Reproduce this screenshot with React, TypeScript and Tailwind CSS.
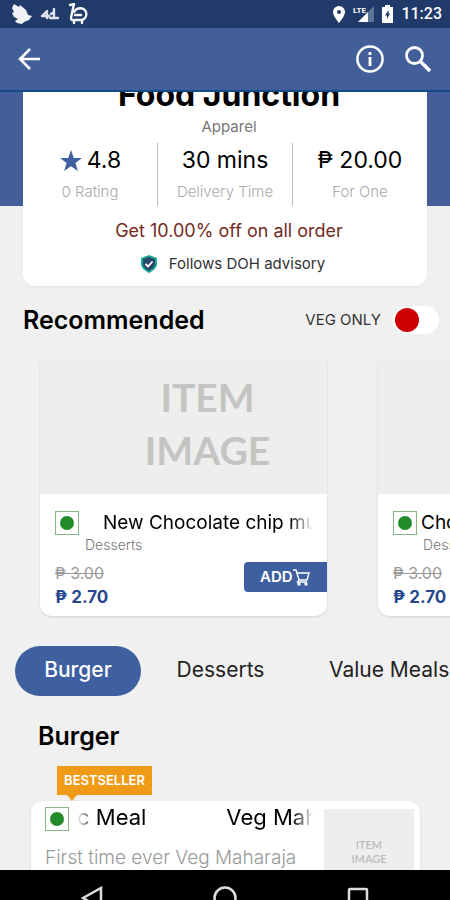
import React from "react";

function Status() {
  return (
    <div className="flex h-7 shrink-0 items-center justify-between bg-[#203a69] pr-2 pl-3 text-white">
      <div className="flex items-center gap-2" aria-hidden="true">
        <svg width="20" height="22" viewBox="0 0 20 22" fill="#f2f3f8">
          <path d="M2 1 7 4 8 2 14 7 16 12 20 13 17 17 12 19 10 21 5 20 3 18 6 16 2 14 0 10 2 9 0 5Z" />
        </svg>
        <svg width="20" height="18" viewBox="0 0 20 18" fill="none" stroke="#dfe3ee" strokeWidth="2.400" strokeLinecap="round" strokeLinejoin="round">
          <path d="M2 11 7 6V13M2 11H9M14 4V13M11 9 14 7M10 13H18" />
        </svg>
        <svg width="20" height="22" viewBox="0 0 20 22" fill="none" stroke="#f5f6fa" strokeWidth="2.400" strokeLinecap="round" strokeLinejoin="round">
          <path d="M2 2 6 1 4 10 3 15C3 18 6 17 6 17V20M6 9C9 4 16 4 18 9C19 13 17 16 14 17V20M6 17H14M7 12H13" />
        </svg>
      </div>
      <div className="flex items-center gap-2">
        <svg width="12" height="17" viewBox="0 0 12 17" fill="#fff" aria-hidden="true">
          <path fillRule="evenodd" d="M6 0a6 6 0 0 0-6 6c0 4 6 11 6 11s6-7 6-11a6 6 0 0 0-6-6Zm0 4a2 2 0 1 1 0 4 2 2 0 0 1 0-4Z" />
        </svg>
        <svg width="21" height="18" viewBox="0 0 21 18" aria-hidden="true">
          <path d="M21 1V17H5Z" fill="#5f7598" />
          <path d="M15 7V17H5Z" fill="#fff" />
          <text x="0" y="8" fontSize="8" fontWeight="700" fontFamily="Roboto, sans-serif" fill="#fff">LTE</text>
        </svg>
        <svg width="11" height="18" viewBox="0 0 11 18" fill="#fff" aria-hidden="true">
          <path fillRule="evenodd" d="M3 0H8V2H11V18H0V2H3ZM6.500 5 3 10.500H5V14L8 8.500H6.500Z" />
        </svg>
        <time className="font-[Roboto,sans-serif] text-base leading-7 font-medium">11:23</time>
      </div>
    </div>
  );
}

function Header() {
  return (
    <header className="flex h-16 shrink-0 items-center justify-between border-b-2 border-[#16488a] bg-[#435f9a] px-[18px] text-white">
      <button aria-label="Back">
        <svg width="24" height="24" viewBox="0 0 24 24" fill="none" stroke="currentColor" strokeWidth="2.500">
          <path d="M22 12H3M12 2 2 12 12 22" />
        </svg>
      </button>
      <div className="flex items-center gap-5">
        <button aria-label="Information">
          <svg width="28" height="28" viewBox="0 0 28 28" fill="none" stroke="currentColor" strokeWidth="2.500">
            <circle cx="14" cy="14" r="12.600" />
            <path d="M14 12V21M14 7V10" strokeWidth="2.800" />
          </svg>
        </button>
        <button aria-label="Search">
          <svg width="28" height="28" viewBox="0 0 28 28" fill="none" stroke="currentColor">
            <circle cx="10.500" cy="10.500" r="8" strokeWidth="2.800" />
            <path d="M16 16 26 26" strokeWidth="3.600" />
          </svg>
        </button>
      </div>
    </header>
  );
}

function VegMark() {
  return (
    <span role="img" aria-label="Vegetarian" className="flex size-6 shrink-0 items-center justify-center border border-[#86b788] bg-white">
      <span className="size-[14px] rounded-full bg-[#238b27]" />
    </span>
  );
}

function Summary() {
  return (
    <section className="bg-[linear-gradient(#435f9a_114px,#f0f0f0_114px)] px-[23px]">
      <div className="flex flex-col items-center overflow-hidden rounded-b-xl bg-white pb-2 shadow-xs">
        <h1 className="-mt-[15px] pl-2 text-[32px] leading-9 font-bold text-black">Food Junction</h1>
        <p className="mt-[2px] pl-2 text-[15px] leading-6 text-[#777]">Apparel</p>
        <dl className="mt-1 flex h-[63px] w-full divide-x divide-[#bbb] text-center">
          <div className="flex flex-1 flex-col-reverse justify-end">
            <dt className="text-[15px] leading-7 font-light text-[#aaa]">0 Rating</dt>
            <dd className="flex items-center justify-center gap-1 text-[23px] leading-[35px] text-black">
              <svg width="24" height="24" viewBox="0 0 24 24" fill="#3f60a0" aria-hidden="true">
                <path d="m12 1 2.800 8H23l-6.600 5 2.500 8L12 17.200 5.100 22l2.500-8L1 9h8.200Z" />
              </svg>
              4.8
            </dd>
          </div>
          <div className="flex flex-1 flex-col-reverse justify-end">
            <dt className="text-[15px] leading-7 font-light text-[#aaa]">Delivery Time</dt>
            <dd className="text-[23px] leading-[35px] text-black">30 mins</dd>
          </div>
          <div className="flex flex-1 flex-col-reverse justify-end">
            <dt className="text-[15px] leading-7 font-light text-[#aaa]">For One</dt>
            <dd className="text-[23px] leading-[35px] text-black">₱ 20.00</dd>
          </div>
        </dl>
        <p className="mt-3 pl-2 text-lg leading-[26px] text-[#742a22]">Get 10.00% off on all order</p>
        <p className="mt-[6px] flex items-center gap-3 pl-4 text-[15px] leading-7 text-[#333]">
          <svg width="16" height="18" viewBox="0 0 16 18" aria-hidden="true">
            <path d="M8 0 16 3V9C16 13 12 16 8 18C4 16 0 13 0 9V3Z" fill="#19aa91" />
            <path d="M8 2 14 4V9C14 12 11 14 8 16C5 14 2 12 2 9V4Z" fill="#29486c" />
            <path d="m4.500 9 2.500 2.500 4.500-5" fill="none" stroke="#fff" strokeWidth="1.800" />
          </svg>
          Follows DOH advisory
        </p>
      </div>
    </section>
  );
}

function RecommendedCard({ name, scrolling }: { name: string; scrolling?: boolean }) {
  return (
    <article className="w-[287px] shrink-0 overflow-hidden rounded-xl bg-white shadow-sm">
      <div className="flex h-[141px] items-center justify-center bg-[#eee] pl-12 text-center font-[Lato,sans-serif] text-[39px] leading-[53px] font-bold text-[#c4c4c3]">
        ITEM<br />IMAGE
      </div>
      <div className="h-[122px] pt-[17px] pl-[15px]">
        <div className="flex items-center gap-1 pr-[14px]">
          <VegMark />
          {scrolling ? (
            <h3 className="flex-1 overflow-hidden pl-5 text-[19px] leading-6 whitespace-nowrap text-black [mask-image:linear-gradient(to_right,black_90%,transparent)]">{name}</h3>
          ) : (
            <h3 className="flex-1 overflow-hidden text-[19px] leading-6 whitespace-nowrap text-black">{name}</h3>
          )}
        </div>
        <p className="pl-[30px] text-[14px] leading-5 font-light text-[#777]">Desserts</p>
        <div className="flex items-start justify-between">
          <div className="pt-[6px]">
            <del className="block text-base leading-6 text-[#999]">₱ 3.00</del>
            <p className="text-[17px] leading-6 font-bold text-[#27478e]">₱ 2.70</p>
          </div>
          <button className="mt-[7px] flex h-[30px] w-[83px] items-center rounded-l bg-[#3f60a0] pl-4 text-[15px] font-semibold text-white">
            ADD
            <svg width="17" height="17" viewBox="0 0 17 17" fill="none" stroke="currentColor" strokeWidth="1.400" aria-hidden="true">
              <path d="M0 1H3L6 11H14L16 4H4M6 11 4.500 13H14" />
              <circle cx="6" cy="15" r="1" />
              <circle cx="13" cy="15" r="1" />
            </svg>
          </button>
        </div>
      </div>
    </article>
  );
}

function Recommended() {
  return (
    <section>
      <div className="mt-4 flex items-center justify-between pr-[11px] pl-[23px]">
        <h2 className="text-[25px] leading-9 font-semibold text-black">Recommended</h2>
        <label className="flex items-center gap-3 text-[15px] text-[#333]">
          VEG ONLY
          <input
            type="checkbox"
            role="switch"
            className="h-7 w-[46px] appearance-none rounded-full bg-white p-[2px] before:block before:size-6 before:rounded-full before:bg-[#cc0000] checked:before:translate-x-[18px]"
          />
        </label>
      </div>
      <div className="mt-[15px] flex gap-[51px] overflow-hidden pb-2 pl-10">
        <RecommendedCard name="New Chocolate chip muffin" scrolling />
        <RecommendedCard name="Chocolate chip muffin" />
      </div>
    </section>
  );
}

function Menu() {
  return (
    <>
      <nav className="mt-[22px] flex h-[50px] overflow-hidden pl-[15px] text-[21px] leading-7 whitespace-nowrap text-[#222]">
        <button className="w-[126px] shrink-0 rounded-full bg-[#3f60a0] pb-[2px] font-medium text-white">Burger</button>
        <button className="ml-[35px] w-[89px] shrink-0 pb-[2px]">Desserts</button>
        <button className="ml-16 shrink-0 pb-[2px]">Value Meals</button>
      </nav>
      <section>
        <h2 className="mt-[22px] pl-[38px] text-[25px] leading-9 font-semibold text-black">Burger</h2>
        <div className="mt-3 ml-[57px] w-[95px]">
          <p className="bg-[#f09b18] text-center text-[13px] leading-[29px] font-semibold text-white">BESTSELLER</p>
          <div className="ml-[10px] size-0 border-x-5 border-t-6 border-x-transparent border-t-[#f09b18]" />
        </div>
        <article className="mr-[30px] ml-[31px] flex gap-2 rounded-t-xl bg-white pr-[6px] pl-[14px] shadow-sm">
          <div className="min-w-0 flex-1">
            <div className="flex items-center gap-2 pt-[2px]">
              <VegMark />
              <h3 className="flex flex-1 gap-20 overflow-hidden pb-1 text-[22px] leading-7 whitespace-nowrap text-black [mask-image:linear-gradient(to_right,transparent,black_8%,black_90%,transparent_99%)]">
                <span>c Meal</span>
                <span>Veg Maharaja Mac Meal</span>
              </h3>
            </div>
            <p className="mt-[11px] text-[19px] leading-6 font-light whitespace-nowrap text-[#999]">First time ever Veg Maharaja</p>
          </div>
          <div className="mt-2 flex h-[90px] w-[90px] shrink-0 items-center justify-center bg-[#eee] pb-1 text-center font-[Lato,sans-serif] text-[11px] leading-[14px] font-semibold text-[#bbb]">
            ITEM<br />IMAGE
          </div>
        </article>
      </section>
    </>
  );
}

export default function App() {
  return (
    <div className="flex h-screen flex-col overflow-hidden bg-[#f0f0f0] font-[Inter,sans-serif]">
      <Status />
      <Header />
      <main className="min-h-0 flex-1 overflow-hidden">
        <Summary />
        <Recommended />
        <Menu />
      </main>
      <footer className="flex h-[30px] shrink-0 items-start justify-around overflow-hidden bg-black px-[26px] pt-4 text-[#ddd]">
        <button aria-label="Back">
          <svg width="22" height="24" viewBox="0 0 22 24" fill="none" stroke="currentColor" strokeWidth="2.500">
            <path d="M20 2V22L2 12Z" />
          </svg>
        </button>
        <button aria-label="Home">
          <svg width="24" height="24" viewBox="0 0 24 24" fill="none" stroke="currentColor" strokeWidth="2.500">
            <circle cx="12" cy="12" r="10.500" />
          </svg>
        </button>
        <button aria-label="Recent apps">
          <svg width="22" height="24" viewBox="0 0 22 24" fill="none" stroke="currentColor" strokeWidth="2.500">
            <rect x="2" y="3" width="18" height="18" rx="1" />
          </svg>
        </button>
      </footer>
    </div>
  );
}
